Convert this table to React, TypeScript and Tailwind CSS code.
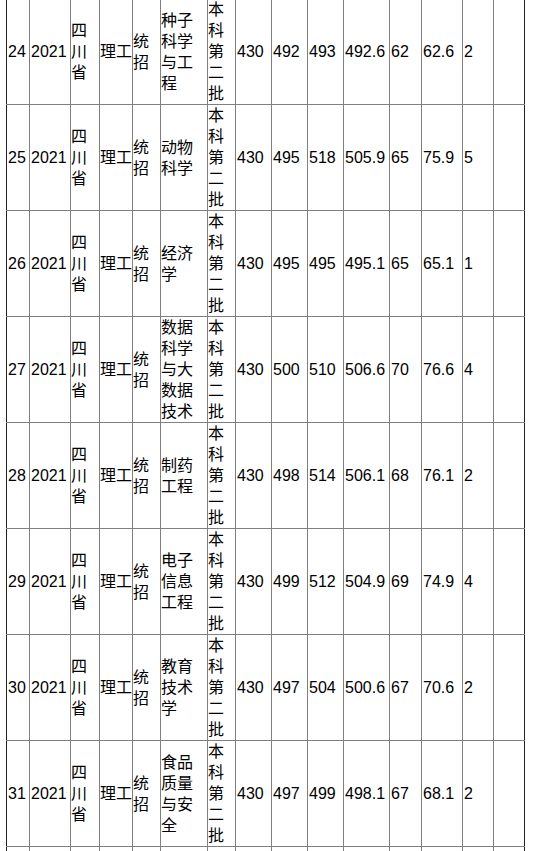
const rows = [
  ["24", "2021", "四川省", "理工", "统招", "种子科学与工程", "本科第二批", "430", "492", "493", "492.6", "62", "62.6", "2"],
  ["25", "2021", "四川省", "理工", "统招", "动物科学", "本科第二批", "430", "495", "518", "505.9", "65", "75.9", "5"],
  ["26", "2021", "四川省", "理工", "统招", "经济学", "本科第二批", "430", "495", "495", "495.1", "65", "65.1", "1"],
  ["27", "2021", "四川省", "理工", "统招", "数据科学与大数据技术", "本科第二批", "430", "500", "510", "506.6", "70", "76.6", "4"],
  ["28", "2021", "四川省", "理工", "统招", "制药工程", "本科第二批", "430", "498", "514", "506.1", "68", "76.1", "2"],
  ["29", "2021", "四川省", "理工", "统招", "电子信息工程", "本科第二批", "430", "499", "512", "504.9", "69", "74.9", "4"],
  ["30", "2021", "四川省", "理工", "统招", "教育技术学", "本科第二批", "430", "497", "504", "500.6", "67", "70.6", "2"],
  ["31", "2021", "四川省", "理工", "统招", "食品质量与安全", "本科第二批", "430", "497", "499", "498.1", "67", "68.1", "2"],
  // next row only peeks in at the bottom edge
  ["32", "", "", "", "", "", "", "", "", "", "", "", "", ""],
];

// cells that hold chinese text get no left padding
const cjk = [2, 3, 4, 5, 6];

const Row = ({ cells, blank }: { cells: string[]; blank?: boolean }) => (
  <div className="grid grid-cols-[24px_41px_29px_33px_28px_47px_28px_36px_36px_36px_46px_32px_41px_31px_31px] border-b border-[#808080]">
    {[...cells, ""].map((c, i) => (
      <div
        key={i}
        className={`flex h-[105px] items-center border-r border-[#808080] ${
          i === 0 ? "border-l border-l-[#222]" : ""
        } ${i === 14 ? "border-r-[#222]" : ""} ${cjk.includes(i) ? "pl-0" : "pl-px"}`}
      >
        {!blank && <span>{c}</span>}
      </div>
    ))}
  </div>
);

export default function App() {
  return (
    <div className="h-[851px] overflow-hidden bg-white">
      <div
        className="-mt-[2px] ml-[6px] w-[519px] border-t border-[#808080] text-[16px] leading-[21px] text-black"
        style={{ fontFamily: '"Liberation Sans", "Noto Sans CJK SC", sans-serif' }}
      >
        {rows.map((r) => (
          <Row key={r[0]} cells={r} blank={r[0] === "32"} />
        ))}
      </div>
    </div>
  );
}
